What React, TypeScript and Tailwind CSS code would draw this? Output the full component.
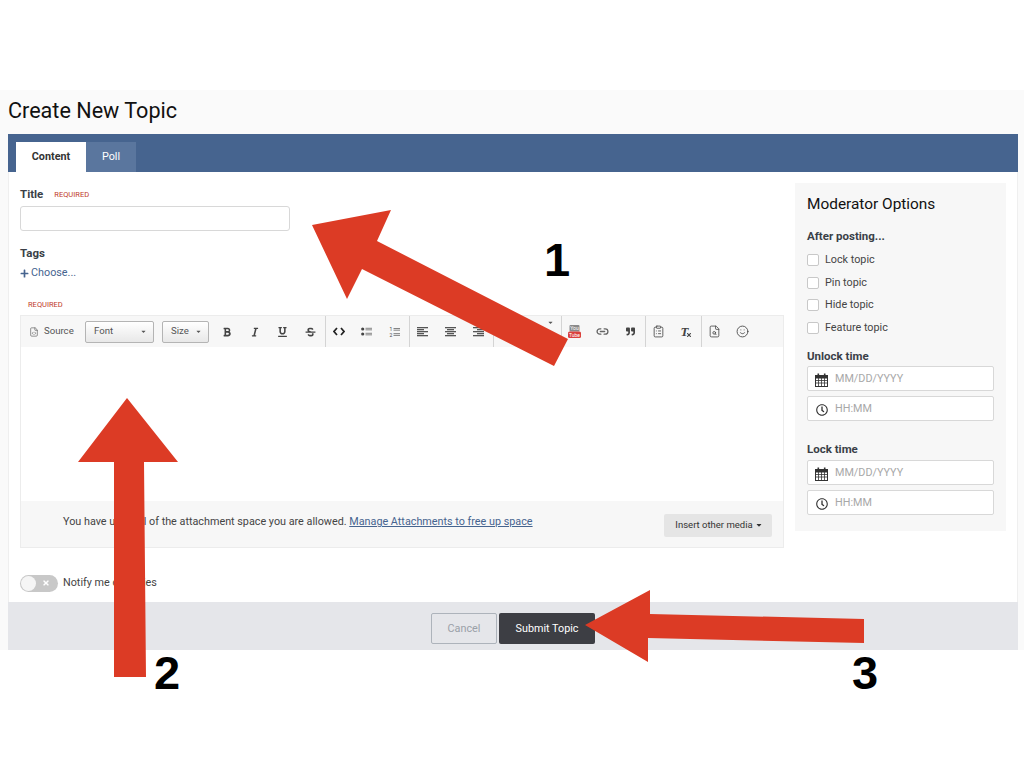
import React from "react";
import { FaRegClock, FaPlus, FaBold, FaItalic, FaUnderline, FaStrikethrough, FaCaretDown, FaTimes, FaQuoteRight } from "react-icons/fa";
import { Smile, FileSearch, FileCode, ClipboardList, Link2 } from "lucide-react";

function Tool({ children }: { children: React.ReactNode }) {
  return <div className="w-[28px] h-full flex items-center justify-center text-[#444] shrink-0">{children}</div>;
}

function Sep() {
  return <div className="w-px h-full bg-[#d4d4d4] shrink-0 -mr-px" />;
}

function Combo({ label, w }: { label: string; w: string }) {
  return (
    <div className={`${w} h-[22px] flex items-center justify-between pl-2 pr-[6px] border border-[#b4b4b4] rounded-[2px] bg-gradient-to-b from-white to-[#e8e8e8] text-[9.6px] text-[#555] shrink-0`}>
      <span>{label}</span>
      <FaCaretDown className="w-[7px] h-[7px] text-[#555]" />
    </div>
  );
}

function AlignIcon({ kind }: { kind: "left" | "center" | "right" }) {
  const rows = [11, 7, 11, 7, 11];
  return (
    <svg width="11" height="10" viewBox="0 0 11 10" fill="#555">
      {rows.map((w, i) => (
        <rect key={i} x={kind === "left" ? 0 : kind === "center" ? (11 - w) / 2 : 11 - w} y={i * 2} width={w} height="1.3" />
      ))}
    </svg>
  );
}

function CalendarIcon() {
  return (
    <svg width="13" height="14" viewBox="0 0 13 14" className="mt-[2px]" fill="none" stroke="#333">
      <rect x="0.5" y="2.5" width="12" height="11" fill="#fff" />
      <rect x="0.5" y="2.5" width="12" height="2.5" fill="#333" />
      <path d="M0.5 7.5h12M0.5 10h12M3.5 5v8.5M6.5 5v8.5M9.5 5v8.5" strokeWidth="0.8" />
      <rect x="2.5" y="0.5" width="1.6" height="3" fill="#333" stroke="none" />
      <rect x="8.9" y="0.5" width="1.6" height="3" fill="#333" stroke="none" />
    </svg>
  );
}

function DateField({ label, clock }: { label: string; clock?: boolean }) {
  return (
    <div className="h-[25px] w-[187px] flex items-center bg-white border border-[#d8d8d8] rounded-[2px] pl-[7px] gap-[7px]">
      <span className="w-[13px] flex justify-center text-[#333]">
        {clock ? <FaRegClock className="w-[12px] h-[12px] mt-[3px]" /> : <CalendarIcon />}
      </span>
      <span className="text-[10.8px] text-[#a8a8a8]">{label}</span>
    </div>
  );
}

function Check({ label }: { label: string }) {
  return (
    <div className="h-[22.6px] flex items-center gap-[6px]">
      <span className="w-[12px] h-[12px] border border-[#c8c8c8] bg-white rounded-[2px]" />
      <span className="text-[10.8px] text-[#444]">{label}</span>
    </div>
  );
}

export default function App() {
  return (
    <div className="relative w-[1024px] h-[768px] bg-white overflow-hidden font-['Roboto',sans-serif]">
      <div className="h-[90px]" />
      <div className="h-[560px] bg-[#fafafa] flex flex-col">
        <h1 className="h-[44px] pl-2 pb-[3px] flex items-center text-[21.6px] leading-none text-[#111] font-normal">Create New Topic</h1>
        <div className="ml-2 mr-[6px] flex-1 flex flex-col">
          <div className="h-[38px] bg-[#46648f] flex items-end pl-2 shrink-0">
            <div className="w-[70px] h-[30px] pt-px bg-white flex items-center justify-center text-[10.8px] font-bold text-[#333]">Content</div>
            <div className="w-[50px] h-[30px] pt-px bg-[#5a769e] flex items-center justify-center text-[10.8px] text-white">Poll</div>
          </div>
          <div className="h-[430px] bg-white flex border-x border-[#efefef] pl-[11px] shrink-0">
            <div className="w-[764px] flex flex-col">
              <div className="h-[34px] flex items-end pb-[4px] gap-[11px]">
                <span className="text-[11.5px] font-bold text-[#3a3f47] leading-[16px]">Title</span>
                <span className="text-[7.5px] text-[#c0392b] leading-[14px]">REQUIRED</span>
              </div>
              <div className="w-[270px] h-[25px] bg-white border border-[#d8d8d8] rounded-[3px]" />
              <div className="mt-[14px] text-[11.5px] font-bold text-[#3a3f47] leading-[16px]">Tags</div>
              <div className="mt-[4px] h-[16px] flex items-center gap-[2px] text-[10.8px] text-[#46648f]">
                <FaPlus className="w-[9px] h-[9px]" />
                <span>Choose...</span>
              </div>
              <div className="mt-[18px] pl-2 h-[12px] flex items-center text-[7.5px] text-[#c0392b]">REQUIRED</div>
              <div className="h-[4px]" />
              <div className="border border-[#ececec] flex flex-col">
                <div className="h-[31px] bg-[#f7f7f7] flex items-center">
                  <div className="w-[64px] h-full flex items-center pl-2 gap-[5px] text-[9.6px] text-[#555] shrink-0">
                    <FileCode className="w-[10px] h-[12px]" strokeWidth={1.5} />
                    <span>Source</span>
                  </div>
                  <Combo label="Font" w="w-[69px]" />
                  <div className="w-2 shrink-0" />
                  <Combo label="Size" w="w-[47px]" />
                  <div className="w-[3.5px] shrink-0" />
                  <Tool><FaBold className="w-[8px] h-[10px]" /></Tool>
                  <Tool><FaItalic className="w-[8px] h-[10px]" /></Tool>
                  <Tool><FaUnderline className="w-[9px] h-[10px]" /></Tool>
                  <Tool><FaStrikethrough className="w-[11px] h-[10px]" /></Tool>
                  <Sep />
                  <Tool>
                    <svg width="12" height="9" viewBox="0 0 12 9" fill="none" stroke="#222" strokeWidth="1.7">
                      <path d="M4 1L1 4.5L4 8M8 1L11 4.5L8 8" />
                    </svg>
                  </Tool>
                  <Tool>
                    <svg width="11" height="9" viewBox="0 0 11 9" fill="#444">
                      <circle cx="1.7" cy="2" r="1.6" />
                      <circle cx="1.7" cy="7" r="1.6" />
                      <rect x="4.5" y="0.8" width="6.5" height="0.9" fill="#777" />
                      <rect x="4.5" y="2.4" width="6.5" height="0.9" fill="#777" />
                      <rect x="4.5" y="5.8" width="6.5" height="0.9" fill="#777" />
                      <rect x="4.5" y="7.4" width="6.5" height="0.9" fill="#777" />
                    </svg>
                  </Tool>
                  <Tool>
                    <svg width="11" height="10" viewBox="0 0 11 10">
                      <text x="0.5" y="4.4" fontSize="5" fontFamily="Roboto, sans-serif" fill="#444">1</text>
                      <text x="0.5" y="9.6" fontSize="5" fontFamily="Roboto, sans-serif" fill="#444">2</text>
                      <rect x="4.5" y="1" width="6.5" height="0.9" fill="#777" />
                      <rect x="4.5" y="2.7" width="6.5" height="0.9" fill="#777" />
                      <rect x="4.5" y="6.2" width="6.5" height="0.9" fill="#777" />
                      <rect x="4.5" y="7.9" width="6.5" height="0.9" fill="#777" />
                    </svg>
                  </Tool>
                  <Sep />
                  <Tool><AlignIcon kind="left" /></Tool>
                  <Tool><AlignIcon kind="center" /></Tool>
                  <Tool><AlignIcon kind="right" /></Tool>
                  <Sep />
                  <div className="w-[68px] h-full flex items-start justify-end pr-[7px] pt-[3px] shrink-0">
                    <FaCaretDown className="w-[7px] h-[7px] text-[#555]" />
                  </div>
                  <Sep />
                  <Tool>
                    <svg width="13" height="13" viewBox="0 0 13 13">
                      <rect x="1.5" y="0" width="10" height="6.5" rx="1" fill="#8a8a8a" />
                      <rect x="0" y="6.5" width="13" height="6.5" rx="1.5" fill="#d9403c" />
                      <text x="6.5" y="5.2" textAnchor="middle" fontSize="5" fill="#fff" fontFamily="Roboto, sans-serif">You</text>
                      <text x="6.5" y="11.6" textAnchor="middle" fontSize="5" fill="#fff" fontFamily="Roboto, sans-serif">Tube</text>
                    </svg>
                  </Tool>
                  <Tool><Link2 className="w-[13px] h-[13px] text-[#666]" strokeWidth={2.4} /></Tool>
                  <Tool><FaQuoteRight className="w-[11px] h-[9px]" /></Tool>
                  <Sep />
                  <Tool><ClipboardList className="w-[13px] h-[13px]" strokeWidth={1.5} /></Tool>
                  <Tool>
                    <span className="relative font-['Liberation_Serif',serif] italic font-bold text-[13px] leading-none pr-[4px]">
                      T
                      <FaTimes className="absolute right-0 bottom-0 w-[6px] h-[6px]" />
                    </span>
                  </Tool>
                  <Sep />
                  <Tool><FileSearch className="w-[13px] h-[13px]" strokeWidth={1.5} /></Tool>
                  <Tool><Smile className="w-[13px] h-[13px]" strokeWidth={1.6} /></Tool>
                </div>
                <div className="h-[154px] bg-white" />
                <div className="h-[46px] bg-[#f7f7f7] flex items-center pl-[42px] pr-[11px]">
                  <span className="text-[10.8px] text-[#444] -mt-[3px]">
                    You have used all of the attachment space you are allowed.{" "}
                    <span className="text-[#46648f] underline">Manage Attachments to free up space</span>
                  </span>
                  <div className="ml-auto w-[108px] h-[23px] mt-[2px] pl-[2px] bg-[#e5e5e5] rounded-[2px] flex items-center justify-center gap-[2px] text-[9.5px] text-[#333]">
                    <span>Insert other media</span>
                    <FaCaretDown className="w-[8px] h-[8px]" />
                  </div>
                </div>
              </div>
              <div className="mt-[26px] h-[18px] flex items-center gap-[5px]">
                <div className="w-[38px] h-[17px] rounded-full bg-[#c8c8c8] flex items-center justify-between pl-[1px] pr-[8px]">
                  <span className="w-[15px] h-[15px] rounded-full bg-[#f5f5f5]" />
                  <FaTimes className="w-[8px] h-[8px] text-white" />
                </div>
                <span className="text-[10.8px] text-[#444]">Notify me of replies</span>
              </div>
            </div>
            <div className="ml-[11px] mt-[11px] w-[211px] h-[348px] bg-[#f7f7f7] pl-[12px] flex flex-col">
              <div className="mt-[12px] h-[20px] flex items-center text-[15.4px] text-[#111]">Moderator Options</div>
              <div className="mt-[14px] h-[16px] flex items-center text-[11.5px] font-bold text-[#3a3f47]">After posting...</div>
              <div className="mt-[4px] flex flex-col">
                <Check label="Lock topic" />
                <Check label="Pin topic" />
                <Check label="Hide topic" />
                <Check label="Feature topic" />
              </div>
              <div className="mt-[9px] h-[16px] flex items-center text-[11.5px] font-bold text-[#3a3f47]">Unlock time</div>
              <div className="mt-[2px] flex flex-col gap-[5px]">
                <DateField label="MM/DD/YYYY" />
                <DateField label="HH:MM" clock />
              </div>
              <div className="mt-[20px] h-[16px] flex items-center text-[11.5px] font-bold text-[#3a3f47]">Lock time</div>
              <div className="mt-[3px] flex flex-col gap-[5px]">
                <DateField label="MM/DD/YYYY" />
                <DateField label="HH:MM" clock />
              </div>
            </div>
          </div>
          <div className="flex-1 bg-[#e5e6ea] flex items-center justify-center gap-[2px] pt-[4px]">
            <div className="w-[66px] h-[31px] pt-[2px] border border-[#adb3bb] rounded-[2px] flex items-center justify-center text-[10.8px] text-[#9aa0a8]">Cancel</div>
            <div className="w-[96px] h-[31px] pt-[2px] bg-[#3d3e44] rounded-[2px] flex items-center justify-center text-[10.8px] text-white">Submit Topic</div>
          </div>
        </div>
      </div>

      <svg className="absolute left-0 top-0 pointer-events-none" width="1024" height="768" viewBox="0 0 1024 768">
        <polygon fill="#dc3b25" points="312,225 391,210 377,241 568,339 554,366 362,269 347,299" />
        <polygon fill="#dc3b25" points="127,398 178,462 144,462 146,677 114,677 114,462 78,462" />
        <polygon fill="#dc3b25" points="585,625 650,590 650,614 864,619 864,643 648,638 648,662" />
      </svg>
      <span className="absolute left-[544px] top-[234px] text-[47px] leading-[52px] font-bold text-black font-['Liberation_Sans',sans-serif]">1</span>
      <span className="absolute left-[154px] top-[647px] text-[47px] leading-[52px] font-bold text-black font-['Liberation_Sans',sans-serif]">2</span>
      <span className="absolute left-[852px] top-[647px] text-[47px] leading-[52px] font-bold text-black font-['Liberation_Sans',sans-serif]">3</span>
    </div>
  );
}
